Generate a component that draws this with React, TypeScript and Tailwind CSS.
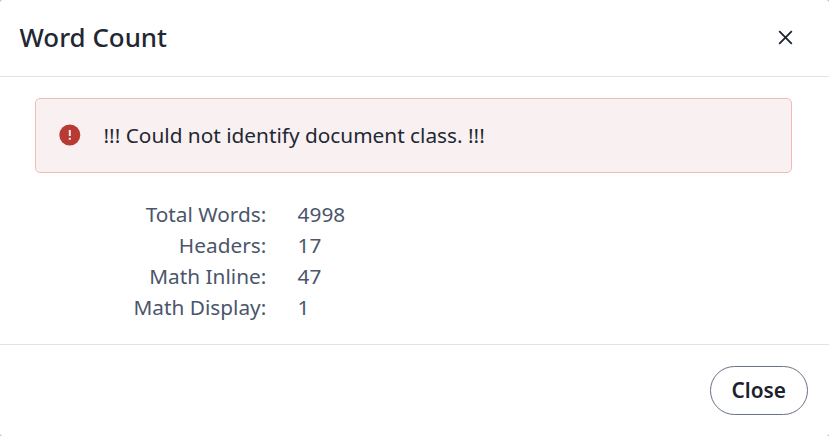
const rows: [string, string][] = [
  ["Total Words", "4998"],
  ["Headers", "17"],
  ["Math Inline", "47"],
  ["Math Display", "1"],
];

export default function App() {
  return (
    <div className="h-screen bg-[#b9bbbf] font-['Noto_Sans',sans-serif]">
      <div className="flex h-full flex-col overflow-hidden rounded-[3px] bg-white text-[#1b222c]">
        <header className="flex h-[77px] shrink-0 items-center justify-between border-b border-[#e0e2e6] pb-[2px] pl-[19.5px] pr-[36px]">
          <h1 className="text-[25.9px] font-medium leading-[36px] text-[#1f2833]">Word Count</h1>
          <button aria-label="Close" className="flex">
            <svg width="15" height="15" viewBox="0 0 15 15" fill="none" stroke="currentColor" strokeWidth="1.8">
              <path d="M1.2 1.2 13.8 13.8M13.8 1.2 1.2 13.8" />
            </svg>
          </button>
        </header>
        <main className="h-[268px] shrink-0 border-b border-[#e0e2e6] px-[35px] pt-[21px]">
          <div className="mr-[2px] flex h-[75px] items-center rounded-[5px] border border-[#f5b8b5] bg-[#f9f0f1] pl-[23px]">
            <svg className="mb-[2px]" width="22" height="22" viewBox="0 0 22 22">
              <circle cx="10.8" cy="11" r="10.5" fill="#b83a33" />
              <path d="M9.8 6h2v5.9h-2zM9.8 13.8h2v2h-2z" fill="#f9f0f1" />
            </svg>
            <p className="ml-[22.5px] text-[20.8px] text-[#1f2833]">!!! Could not identify document class. !!!</p>
          </div>
          <dl className="mt-[26px] text-[20.8px] leading-[31px] text-[#4b566b]">
            {rows.map(([label, value]) => (
              <div key={label} className="flex">
                <dt className="w-[231.3px] text-right">{label}:</dt>
                <dd className="ml-[31.3px]">{value}</dd>
              </div>
            ))}
          </dl>
        </main>
        <footer className="flex flex-1 items-center justify-end pr-[21px]">
          <button className="h-[49px] w-[98px] rounded-full border border-[#677283] pr-[0.5px] text-[20.8px] font-semibold">Close</button>
        </footer>
      </div>
    </div>
  );
}
